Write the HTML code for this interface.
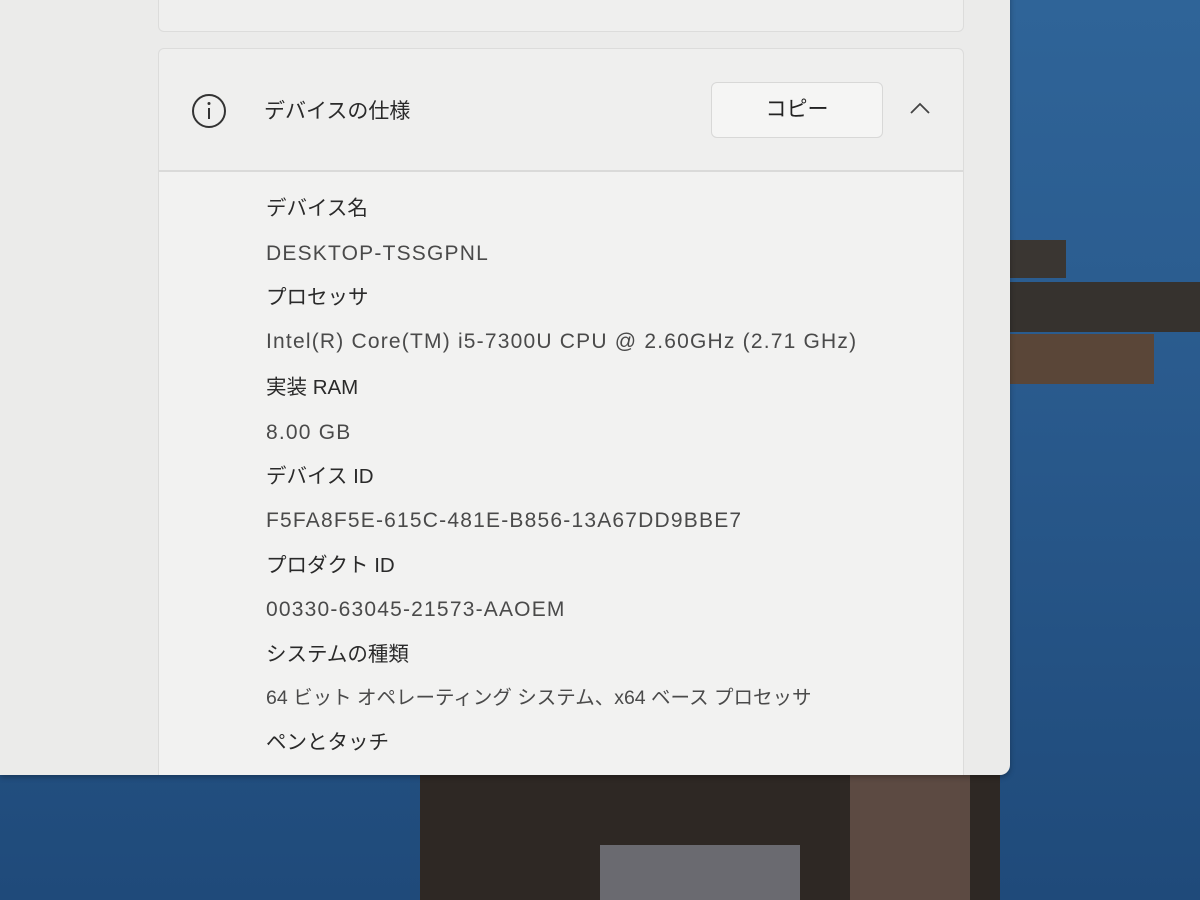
<!DOCTYPE html>
<html><head><meta charset="utf-8"><style>
body{margin:0;width:1200px;height:900px;overflow:hidden;position:relative;background:linear-gradient(180deg,#2f6498 0%,#2a5b8e 40%,#1f4a7a 100%);font-family:"Liberation Sans","Noto Sans CJK JP",sans-serif;}
.win{position:absolute;left:0;top:-10px;width:1010px;height:785px;background:#ebebea;border-radius:0 0 10px 0;box-shadow:0 2px 6px rgba(0,0,0,.3);overflow:hidden}
.card0{position:absolute;left:158px;top:-10px;width:804px;height:50px;background:#efefee;border:1px solid #dcdcdb;border-radius:6px}
.btn0{position:absolute;left:672px;top:-10px;width:258px;height:16px;border:1px solid #d6d6d5;border-radius:5px;background:#f3f3f2}
.card{position:absolute;left:158px;top:58px;width:804px;height:740px;background:#efefee;border:1px solid #dcdcdb;border-radius:6px 6px 0 0}
.hdr{position:absolute;left:0;top:0;width:804px;height:121px;border-bottom:2px solid #dadad9}
.det{position:absolute;left:0;top:123px;width:804px;height:620px;background:#f2f2f1}
.t{position:absolute;left:107px;font-size:20.5px;line-height:30px;height:30px;color:#2a2a2a;white-space:nowrap}
.v{color:#4a4a4a;font-size:21px;letter-spacing:1.2px}
.copy{position:absolute;left:552px;top:33px;width:170px;height:54px;border:1px solid #d8d8d7;border-radius:6px;background:#f5f5f4;font-size:21px;color:#222;text-align:center;line-height:54px}
.post{position:absolute;background:#2a231e}
</style></head><body>
<div class="post" style="left:1008px;top:240px;width:58px;height:38px;background:#3a3632"></div>
<div class="post" style="left:1008px;top:282px;width:192px;height:50px;background:#36322e"></div>
<div class="post" style="left:1008px;top:334px;width:146px;height:50px;background:#5a4638"></div>
<div class="post" style="left:420px;top:770px;width:580px;height:130px;background:#2e2824"></div>
<div class="post" style="left:600px;top:845px;width:200px;height:55px;background:#6a6a70"></div>
<div class="post" style="left:850px;top:770px;width:120px;height:130px;background:#5c4a42"></div>
<div class="win">
<div class="card0"><div style="position:absolute;left:28px;top:0;font-size:18px;color:#444">Surface Pro</div></div>
<div class="btn0"></div>
<div class="card">
<div class="hdr">
<svg style="position:absolute;left:32px;top:44px" width="36" height="36" viewBox="0 0 36 36"><circle cx="18" cy="18" r="16" fill="none" stroke="#333" stroke-width="2"/><line x1="18" y1="15" x2="18" y2="26" stroke="#333" stroke-width="2"/><circle cx="18" cy="10.5" r="1.5" fill="#333"/></svg>
<div class="t" style="left:105px;top:48px;font-size:21px">デバイスの仕様</div>
<div class="copy">コピー</div>
<svg style="position:absolute;left:750px;top:52px" width="22" height="14" viewBox="0 0 22 14"><polyline points="2,12 11,3 20,12" fill="none" stroke="#444" stroke-width="1.8"/></svg>
</div>
<div class="det">
<div class="t" style="top:22px">デバイス名</div>
<div class="t v" style="top:67px">DESKTOP-TSSGPNL</div>
<div class="t" style="top:111px">プロセッサ</div>
<div class="t v" style="top:155px">Intel(R) Core(TM) i5-7300U CPU @ 2.60GHz (2.71 GHz)</div>
<div class="t" style="top:201px">実装 RAM</div>
<div class="t v" style="top:246px">8.00 GB</div>
<div class="t" style="top:290px">デバイス ID</div>
<div class="t v" style="top:334px">F5FA8F5E-615C-481E-B856-13A67DD9BBE7</div>
<div class="t" style="top:379px">プロダクト ID</div>
<div class="t v" style="top:423px">00330-63045-21573-AAOEM</div>
<div class="t" style="top:468px">システムの種類</div>
<div class="t" style="top:511px;color:#4a4a4a;font-size:19.5px">64 ビット オペレーティング システム、x64 ベース プロセッサ</div>
<div class="t" style="top:556px">ペンとタッチ</div>
</div>
</div>
</div>
</body></html>
